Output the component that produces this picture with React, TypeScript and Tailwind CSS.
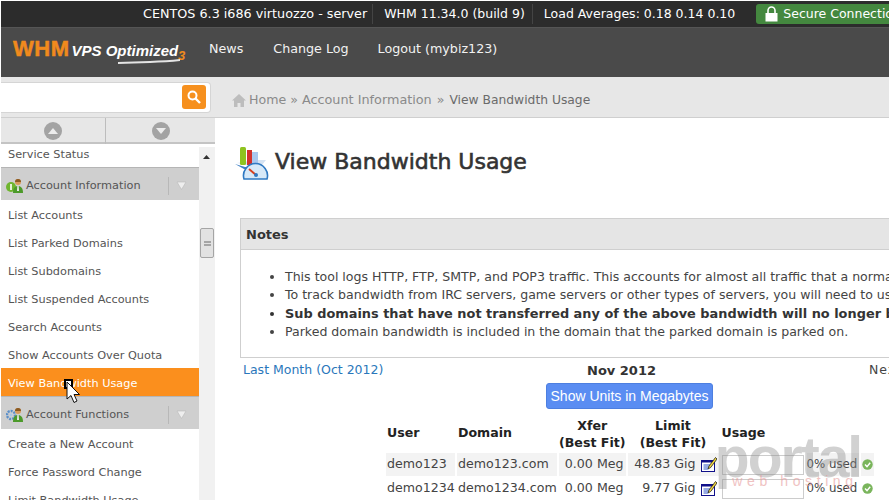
import React from "react";

const font = { fontFamily: '"DejaVu Sans", sans-serif' };

function Triangle({ up }: { up?: boolean }) {
  return (
    <span className="flex h-[18px] w-[18px] items-center justify-center rounded-full bg-[#a3a3a3]">
      <svg width="10" height="6" viewBox="0 0 10 6">
        <path d={up ? "M5 0L10 6H0Z" : "M0 0H10L5 6Z"} fill="#ececec" />
      </svg>
    </span>
  );
}

function GroupIcon({ kind }: { kind: "info" | "gear" }) {
  return (
    <svg width="18" height="16" viewBox="0 0 18 16" className="shrink-0">
      {kind === "info" ? (
        <>
          <circle cx="5" cy="9" r="5" fill="#6fb52e" />
          <rect x="4.2" y="6" width="1.6" height="6" fill="#fff" />
        </>
      ) : (
        <>
          <circle cx="5" cy="8" r="4" fill="none" stroke="#5b8fc9" strokeWidth="2.4" strokeDasharray="2 1" />
          <circle cx="5" cy="8" r="1.4" fill="#a9c7e6" />
        </>
      )}
      <circle cx="12" cy="4" r="3" fill="#d89a5a" />
      <path d="M12 1a3 3 0 0 1 3 3H9a3 3 0 0 1 3-3Z" fill="#8a5a22" />
      <path d="M7 15c0-5 2-7 5-7s5 2 5 7Z" fill="#4c9a2a" />
      <path d="M11.3 8h1.4l.3 5h-2Z" fill="#e8e8e8" />
    </svg>
  );
}

function Group({ label, kind }: { label: string; kind: "info" | "gear" }) {
  return (
    <div className="flex h-[33px] items-center border-t border-[#b5b5b5] bg-[#cfcfcf] pl-[5px] pr-[8px] pt-[3px]">
      <GroupIcon kind={kind} />
      <span className="ml-[2px] flex-1 text-[#555]">{label}</span>
      <span className="flex h-[18px] items-center border-l border-[#b8b8b8] pl-[7px]">
        <svg width="11" height="9" viewBox="0 0 11 9">
          <path d="M1 1H10L5.5 8.5Z" fill="#eee" stroke="#bbb" strokeWidth="0.6" />
        </svg>
      </span>
      <span className="w-[4px]" />
    </div>
  );
}

function Item({ label, active }: { label: string; active?: boolean }) {
  return (
    <div
      className={
        active
          ? "flex h-[28px] items-center bg-[#fb8f1d] pl-[7px] pt-[3px] text-white"
          : "flex h-[28px] items-center pl-[7px] pt-[3px] text-[#555]"
      }
    >
      {label}
    </div>
  );
}

function EditIcon() {
  return (
    <svg width="16" height="15" viewBox="0 0 16 15" className="shrink-0">
      <rect x="0.5" y="3.5" width="13" height="11" fill="#fff" stroke="#10108a" />
      <rect x="0.5" y="3.5" width="13" height="2" fill="#10108a" />
      <path d="M2.5 8H9M2.5 10H9M2.5 12H7" stroke="#2f55c8" strokeWidth="1" />
      <path d="M14.5 0.5L8 9L7 12L9.7 10.5L16 2Z" fill="#f2d53c" stroke="#222" strokeWidth="0.8" />
    </svg>
  );
}

function Ok() {
  return (
    <svg width="11" height="11" viewBox="0 0 11 11" className="shrink-0">
      <circle cx="5.5" cy="5.5" r="5.2" fill="#7ab55c" />
      <path d="M3 5.6L5 7.6L8.2 3.8" stroke="#fff" strokeWidth="1.4" fill="none" />
    </svg>
  );
}

const rows = [
  { user: "demo123", domain: "demo123.com", xfer: "0.00 Meg", limit: "48.83 Gig", shaded: true },
  { user: "demo1234", domain: "demo1234.com", xfer: "0.00 Meg", limit: "9.77 Gig", shaded: false },
];

export default function App() {
  return (
    <div
      className="flex h-[500px] w-[889px] flex-col overflow-hidden bg-white pl-px pt-px text-[11.3px] leading-none text-[#444]"
      style={font}
    >
      {/* top bar */}
      <div className="flex h-[26px] shrink-0 items-center whitespace-nowrap bg-[#2c2c2c] pl-[142px] text-[12.5px] text-white">
        <span className="pr-[5px] text-[12.75px]">CENTOS 6.3 i686 virtuozzo - server</span>
        <span className="h-[20px] border-l border-[#444]" />
        <span className="pl-[11px] pr-[7px]">WHM 11.34.0 (build 9)</span>
        <span className="h-[20px] border-l border-[#444]" />
        <span className="pl-[11px]">Load Averages: 0.18 0.14 0.10</span>
        <span className="ml-[21px] flex h-[20px] w-[140px] shrink-0 items-center rounded-l-[3px] bg-[#44883f] pl-[9px]">
          <svg width="13" height="16" viewBox="0 0 13 16" className="mr-[5px] shrink-0">
            <path d="M3 7V4.5a3.5 3.5 0 0 1 7 0V7" stroke="#fff" strokeWidth="1.6" fill="none" />
            <rect x="0.5" y="7" width="12" height="8.5" fill="#fff" />
          </svg>
          Secure Connection
        </span>
      </div>

      {/* header */}
      <div className="flex h-[50px] shrink-0 items-center border-t border-[#555] bg-[#4a4a4a] pb-[7px] text-[12.7px] text-[#f2f2f2]">
        <div
          className="relative ml-[12px] flex h-[26px] w-[170px] items-baseline whitespace-nowrap"
          style={{ fontFamily: '"Liberation Sans", sans-serif' }}
        >
          <span className="text-[22px] font-bold leading-[26px] tracking-[0.5px] text-[#f08a1d] [-webkit-text-stroke:0.5px_#f08a1d]">
            WHM
          </span>
          <span className="ml-[2px] text-[15px] font-bold italic text-white">VPS Optimized</span>
          <span className="absolute left-[165px] top-[13px] text-[13px] font-bold italic text-[#f08a1d]">3</span>
          <svg width="62" height="5" viewBox="0 0 62 5" className="absolute left-[105px] top-[23px]">
            <path d="M0 3C20 2 45 2 62 0V2C45 4 20 4 0 5Z" fill="#e4e4e4" />
          </svg>
        </div>
        <span className="ml-[26px]">News</span>
        <span className="ml-[30px]">Change Log</span>
        <span className="ml-[29px]">Logout (mybiz123)</span>
      </div>

      {/* search + breadcrumb */}
      <div className="flex h-[41px] shrink-0 border-b border-[#cfcfcf] bg-[#e7e7e7]">
        <div className="flex w-[214px] shrink-0 items-center">
          <div className="flex h-[31px] w-[210px] items-center justify-end rounded-r-[4px] border border-l-0 border-[#d5d5d5] bg-white pr-[4px]">
            <span className="flex h-[24px] w-[24px] items-center justify-center rounded-[3px] bg-[#f6901e]">
              <svg width="16" height="16" viewBox="0 0 16 16">
                <circle cx="6.5" cy="6.5" r="4" fill="none" stroke="#fff" strokeWidth="2" />
                <path d="M9.5 9.5L14 14" stroke="#fff" strokeWidth="2.4" />
              </svg>
            </span>
          </div>
        </div>
        <div className="flex items-center whitespace-nowrap pl-[17px] pt-[7px] text-[12.6px] text-[#8a8a8a]">
          <svg width="14" height="13" viewBox="0 0 14 13" className="mr-[3px]">
            <path d="M7 0L14 6.5H12V13H8.5V9h-3v4H2V6.5H0Z" fill="#bdbdbd" />
          </svg>
          <span>Home</span>
          <span className="ml-[4px]">»</span>
          <span className="ml-[4px] text-[12.8px]">Account Information</span>
          <span className="ml-[5px]">»</span>
          <span className="ml-[5px] text-[12.3px] text-[#6b6b6b]">View Bandwidth Usage</span>
        </div>
      </div>

      <div className="flex min-h-0 flex-1">
        {/* sidebar */}
        <div className="flex w-[214px] shrink-0 flex-col">
          <div className="flex h-[29px] shrink-0 border-b-[3px] border-b-white bg-[#e7e7e7] shadow-[inset_0_-2px_0_#c4c4c4]">
            <div className="flex w-[105px] items-center justify-center border-r border-[#bdbdbd]">
              <Triangle up />
            </div>
            <div className="flex flex-1 items-center justify-center">
              <Triangle />
            </div>
          </div>
          <div className="flex min-h-0 flex-1">
            <div className="w-[198px] shrink-0 overflow-hidden">
              <div className="flex h-[20px] items-end pb-[7px] text-[#555]">
                <span className="pl-[7px]">Service Status</span>
              </div>
              <Group label="Account Information" kind="info" />
              <Item label="List Accounts" />
              <Item label="List Parked Domains" />
              <Item label="List Subdomains" />
              <Item label="List Suspended Accounts" />
              <Item label="Search Accounts" />
              <Item label="Show Accounts Over Quota" />
              <Item label="View Bandwidth Usage" active />
              <Group label="Account Functions" kind="gear" />
              <Item label="Create a New Account" />
              <Item label="Force Password Change" />
              <Item label="Limit Bandwidth Usage" />
            </div>
            <div className="relative flex-1 bg-[#f1f1f1]">
              <svg width="7" height="4" viewBox="0 0 7 4" className="absolute left-[4px] top-[8px]">
                <path d="M3.5 0L7 4H0Z" fill="#333" />
              </svg>
              <div className="absolute left-[1px] top-[81px] flex h-[30px] w-[14px] items-center justify-center rounded-[2px] border border-[#a5a5a5] bg-[#e2e2e2]">
                <span className="h-[5px] w-[7px] border-y-2 border-[#a5a5a5]" />
              </div>
            </div>
          </div>
        </div>

        {/* main */}
        <div className="min-w-0 flex-1 overflow-hidden pl-[20px]">
          <div className="flex h-[100px] items-start pt-[28px]">
            <svg width="34" height="34" viewBox="0 0 34 34" className="shrink-0">
              <path d="M2 17L12 19H27L31 14H20Z" fill="#d5e3f3" />
              <rect x="5" y="1" width="6" height="18" rx="1.5" fill="#8fc31f" />
              <rect x="12" y="4" width="5" height="15" fill="#d2322d" />
              <rect x="17" y="6" width="6" height="13" fill="#a9c7ee" />
              <path d="M0 18L10 21H26V23H9Z" fill="#3f7fc4" />
              <path d="M9 33a12 12 0 1 1 23 0Z" fill="#d7e9f8" stroke="#2f79c2" strokeWidth="1.6" />
              <path d="M14 23l7 6" stroke="#d6401f" strokeWidth="2" />
              <circle cx="21" cy="29" r="2" fill="#2f79c2" />
            </svg>
            <h1 className="ml-[6px] mt-[5px] whitespace-nowrap text-[22px] font-normal text-[#333] [-webkit-text-stroke:0.6px_#333]">
              View Bandwidth Usage
            </h1>
          </div>

          <div className="ml-[5px] w-[900px] border border-r-0 border-[#cfcfcf]">
            <div className="flex h-[31px] items-center border-b border-[#cfcfcf] bg-[#e5e5e5] pl-[5px] text-[13px] font-bold text-[#333]">
              Notes
            </div>
            <ul className="h-[107px] list-disc whitespace-nowrap pl-[44px] pt-[18px] text-[12.55px] leading-[18.4px] text-[#444]">
              <li>This tool logs HTTP, FTP, SMTP, and POP3 traffic. This accounts for almost all traffic that a normal server will use.</li>
              <li>To track bandwidth from IRC servers, game servers or other types of servers, you will need to use</li>
              <li className="text-[12.9px] font-bold text-[#333]">Sub domains that have not transferred any of the above bandwidth will no longer be listed</li>
              <li>Parked domain bandwidth is included in the domain that the parked domain is parked on.</li>
            </ul>
          </div>

          <div className="ml-[5px] flex h-[25px] w-[900px] items-center whitespace-nowrap pl-[3px] text-[12.5px]">
            <span className="w-[344px] text-[#2a77bb]">Last Month (Oct 2012)</span>
            <span className="text-[13px] font-bold text-[#333]">Nov 2012</span>
            <span className="ml-[213px] tracking-[1px]">Next</span>
          </div>

          <div
            className="ml-[311px] flex h-[26px] w-[167px] items-center justify-center rounded-[3px] border border-[#4d7fe0] bg-[#5a8df2] text-[14px] text-white"
            style={{ fontFamily: '"Liberation Sans", sans-serif' }}
          >
            Show Units in Megabytes
          </div>

          <table className="ml-[149px] mt-[6px] table-fixed border-separate border-spacing-x-[2px] border-spacing-y-[1px] whitespace-nowrap text-[12.6px]">
            <colgroup>
              <col className="w-[69px]" />
              <col className="w-[100px]" />
              <col className="w-[66px]" />
              <col className="w-[91px]" />
              <col className="w-[84px]" />
              <col className="w-[52px]" />
              <col className="w-[13px]" />
            </colgroup>
            <thead>
              <tr className="font-bold text-[#222]">
                <th className="h-[36px] pb-[1px] pl-[1px] text-left align-middle">User</th>
                <th className="pb-[1px] pl-[1px] text-left align-middle">Domain</th>
                <th className="pb-[1px] text-center align-middle leading-[17px]">
                  Xfer
                  <br />
                  (Best Fit)
                </th>
                <th className="pb-[1px] text-center align-middle leading-[17px]">
                  Limit
                  <br />
                  (Best Fit)
                </th>
                <th colSpan={3} className="pb-[1px] pl-[1px] text-left align-middle">
                  Usage
                </th>
              </tr>
            </thead>
            <tbody>
              {rows.map((r) => (
                <tr key={r.user} className={r.shaded ? "[&>td]:bg-[#f3f3f3]" : ""}>
                  <td className="h-[23px] pl-[1px]">{r.user}</td>
                  <td className="pl-[1px]">{r.domain}</td>
                  <td className="pr-[2px] text-right">{r.xfer}</td>
                  <td className="text-right">
                    <span className="flex items-center justify-end gap-[5px] pr-[2px]">
                      {r.limit}
                      <EditIcon />
                    </span>
                  </td>
                  <td className="!bg-white pl-px">
                    <span className="block h-[20px] w-[82px] border border-[#ccc] bg-white" />
                  </td>
                  <td className="text-[11.8px]">0% used</td>
                  <td className="pl-px">
                    <Ok />
                  </td>
                </tr>
              ))}
            </tbody>
          </table>
        </div>
      </div>

      {/* watermark */}
      <div
        className="pointer-events-none absolute left-[715px] top-[431px] flex w-[146px] flex-col items-center whitespace-nowrap"
        style={{ fontFamily: '"Liberation Sans", sans-serif' }}
      >
        <span className="text-[57px] font-bold leading-[52px] tracking-[-2px] text-[#8d8d8d] opacity-40">portal</span>
        <span className="-mt-[9px] ml-[14px] text-[14px] leading-[14px] tracking-[4.6px] text-[#e79a9a] opacity-60">web hosting</span>
      </div>

      {/* cursor */}
      <div className="absolute left-[64px] top-[379px] h-[10px] w-[9px] border-2 border-black bg-white" />
      <svg width="16" height="24" viewBox="0 0 16 24" className="absolute left-[66px] top-[381px]">
        <path d="M1 1V18L5 14.5L8 21.5L11 20L8 13.5H13.5Z" fill="#fff" stroke="#111" strokeWidth="1" />
      </svg>
    </div>
  );
}
